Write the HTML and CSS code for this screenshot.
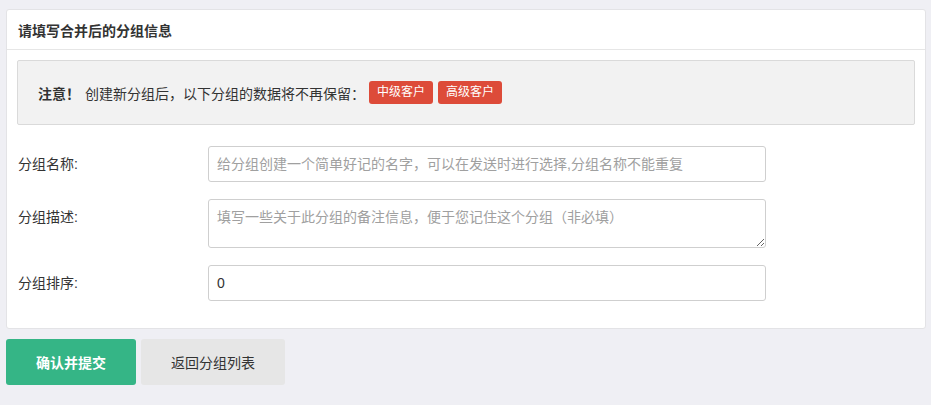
FILE: index.html
```html
<!DOCTYPE html>
<html lang="zh-CN">
<head>
<meta charset="utf-8">
<title>合并分组</title>
<link rel="stylesheet" href="styles.css">
</head>
<body>
<div class="page">
  <div class="card">
    <div class="card-header">请填写合并后的分组信息</div>
    <div class="card-body">
      <div class="alert">
        <strong class="alert-label">注意！</strong>
        <span class="alert-text">创建新分组后，以下分组的数据将不再保留：</span>
        <span class="tag">中级客户</span>
        <span class="tag">高级客户</span>
      </div>
      <form class="form">
        <div class="row">
          <label class="label">分组名称:</label>
          <input class="field" type="text" placeholder="给分组创建一个简单好记的名字，可以在发送时进行选择,分组名称不能重复">
        </div>
        <div class="row">
          <label class="label">分组描述:</label>
          <textarea class="field area" placeholder="填写一些关于此分组的备注信息，便于您记住这个分组（非必填）"></textarea>
        </div>
        <div class="row">
          <label class="label">分组排序:</label>
          <input class="field" type="text" value="0">
        </div>
      </form>
    </div>
  </div>
  <div class="actions">
    <button class="btn btn-primary" type="button">确认并提交</button>
    <button class="btn btn-default" type="button">返回分组列表</button>
  </div>
</div>
</body>
</html>
```

FILE: styles.css
```css
* { box-sizing: border-box; }
html, body {
  margin: 0;
  padding: 0;
  background: #efeff4;
  font-family: "Liberation Sans", "Noto Sans CJK SC", sans-serif;
  font-size: 14px;
  color: #333;
}
.page {
  padding: 9px 5px 0 6px;
}
.card {
  background: #fff;
  border: 1px solid #e3e3e6;
  border-radius: 3px;
}
.card-header {
  height: 40px;
  line-height: 42px;
  padding: 0 11px;
  font-weight: bold;
  font-size: 14px;
  color: #333;
  border-bottom: 1px solid #e6e6e6;
}
.card-body {
  padding: 10px 10px 27px 10px;
}
.alert {
  display: flex;
  align-items: center;
  height: 65px;
  padding: 0 20px;
  background: #f2f2f2;
  border: 1px solid #dadada;
  border-radius: 2px;
}
.alert-label {
  font-weight: bold;
  margin-right: 5px;
}
.alert-text {
  margin-right: 4px;
}
.tag {
  display: inline-block;
  height: 23px;
  line-height: 23px;
  padding: 0 8px;
  margin-right: 5px;
  background: #dd4b39;
  color: #fff;
  font-size: 12px;
  border-radius: 3px;
}
.form {
  display: flex;
  flex-direction: column;
  gap: 17px;
  margin-top: 21px;
}
.row {
  display: flex;
  align-items: flex-start;
}
.label {
  width: 191px;
  padding-left: 1px;
  line-height: 36px;
  flex-shrink: 0;
}
.field {
  width: 558px;
  height: 36px;
  padding: 0 8px;
  border: 1px solid #cfcfcf;
  border-radius: 3px;
  font-family: inherit;
  font-size: 14px;
  color: #333;
  background: #fff;
  outline: none;
}
.field::placeholder {
  color: #a0a0a0;
}
.area {
  height: 49px;
  padding: 7px 8px;
  line-height: 20px;
  resize: vertical;
  display: block;
}
.actions {
  display: flex;
  gap: 5px;
  margin-top: 10px;
}
.btn {
  height: 46px;
  border: none;
  border-radius: 3px;
  font-family: inherit;
  font-size: 14px;
  cursor: pointer;
}
.btn-primary {
  width: 130px;
  background: #35b586;
  color: #fff;
  font-weight: bold;
}
.btn-default {
  width: 144px;
  background: #e6e6e6;
  color: #333;
}
```
